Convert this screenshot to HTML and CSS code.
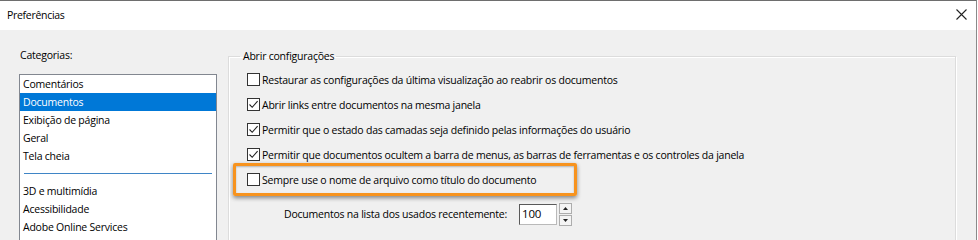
FILE: index.html
```html
<!DOCTYPE html>
<html lang="pt">
<head>
<meta charset="utf-8">
<title>Preferências</title>
<link rel="stylesheet" href="styles.css">
</head>
<body>
<div class="window">
  <div class="titlebar">
    <span class="title">Preferências</span>
    <svg class="close" width="11" height="11" viewBox="0 0 11 11"><path d="M0.5 0.5 L10.5 10.5 M10.5 0.5 L0.5 10.5" stroke="#222" stroke-width="1.1" fill="none"/></svg>
  </div>
  <div class="content">
    <div class="left">
      <div class="label">Categorias:</div>
      <div class="listbox">
        <div class="item">Comentários</div>
        <div class="item selected">Documentos</div>
        <div class="item">Exibição de página</div>
        <div class="item">Geral</div>
        <div class="item">Tela cheia</div>
        <div class="sep"></div>
        <div class="item">3D e multimídia</div>
        <div class="item">Acessibilidade</div>
        <div class="item">Adobe Online Services</div>
        <div class="item">Assinaturas</div>
      </div>
    </div>
    <fieldset class="group">
      <legend>Abrir configurações</legend>
      <div class="row"><span class="cb"></span><span>Restaurar as configurações da última visualização ao reabrir os documentos</span></div>
      <div class="row"><span class="cb checked"><svg width="11" height="11" viewBox="0 0 11 11"><path d="M1.5 5.5 L4.2 8.3 L9.6 2.2" stroke="#222" stroke-width="1.1" fill="none"/></svg></span><span>Abrir links entre documentos na mesma janela</span></div>
      <div class="row"><span class="cb checked"><svg width="11" height="11" viewBox="0 0 11 11"><path d="M1.5 5.5 L4.2 8.3 L9.6 2.2" stroke="#222" stroke-width="1.1" fill="none"/></svg></span><span>Permitir que o estado das camadas seja definido pelas informações do usuário</span></div>
      <div class="row"><span class="cb checked"><svg width="11" height="11" viewBox="0 0 11 11"><path d="M1.5 5.5 L4.2 8.3 L9.6 2.2" stroke="#222" stroke-width="1.1" fill="none"/></svg></span><span>Permitir que documentos ocultem a barra de menus, as barras de ferramentas e os controles da janela</span></div>
      <div class="row"><span class="cb"></span><span>Sempre use o nome de arquivo como título do documento</span><span class="callout"></span></div>
      <div class="recent">
        <span>Documentos na lista dos usados recentemente:</span>
        <span class="num">100</span>
        <span class="spin">
          <span class="sbtn"><svg width="5" height="3" viewBox="0 0 5 3"><path d="M0 3 L2.5 0 L5 3 Z" fill="#222"/></svg></span>
          <span class="sbtn"><svg width="5" height="3" viewBox="0 0 5 3"><path d="M0 0 L2.5 3 L5 0 Z" fill="#222"/></svg></span>
        </span>
      </div>
    </fieldset>
  </div>
</div>
</body>
</html>
```

FILE: styles.css
```css
html, body {
  margin: 0;
  padding: 0;
  background: #ffffff;
}
body {
  font-family: "Open Sans", "Noto Sans", sans-serif;
  font-size: 10.5px;
  letter-spacing: -0.22px;
  color: #000;
}
.window {
  width: 976px;
  height: 239px;
  border-top: 1px solid #6e6e6e;
  border-right: 1px solid #8a8a8a;
  background: #f0f0f0;
  overflow: hidden;
}
.titlebar {
  height: 29px;
  background: #fff;
  display: flex;
  align-items: center;
  justify-content: space-between;
  padding: 0 9px 0 7px;
}
.title {
  font-size: 10.5px;
  letter-spacing: -0.3px;
  margin-top: -1px;
}
.close {
  margin-top: -2px;
}
.content {
  display: flex;
  align-items: flex-start;
  padding: 17px 0 0 19px;
}
.left {
  width: 198px;
  display: flex;
  flex-direction: column;
}
.label {
  padding-left: 1px;
  height: 16px;
  line-height: 16px;
  margin-bottom: 11px;
}
.listbox {
  background: #fff;
  border: 1px solid #828790;
  height: 200px;
  padding-top: 0;
}
.item {
  height: 18px;
  line-height: 18px;
  padding-left: 3px;
}
.item.selected {
  background: #0078d7;
  color: #fff;
}
.sep {
  height: 1px;
  background: #3f85c6;
  margin: 8px 4px 8px 4px;
}
.group {
  margin: 1px 0 0 11px;
  width: 728px;
  height: 220px;
  border: 1px solid #dcdcdc;
  box-shadow: inset 1px 1px 0 #fff, 1px 1px 0 #fff;
  padding: 3px 0 0 18px;
  box-sizing: border-box;
}
.group legend {
  padding: 0 2px 0 3px;
  margin-left: -7px;
  line-height: 16px;
}
.row {
  position: relative;
  display: flex;
  align-items: center;
  gap: 2px;
  height: 25px;
}
.cb {
  width: 11px;
  height: 11px;
  border: 1px solid #333;
  background: #fff;
  display: flex;
}
.callout {
  position: absolute;
  left: -14px;
  top: -4px;
  width: 338px;
  height: 27px;
  border: 3px solid #f7931e;
  border-radius: 2px;
  box-shadow: 0 2px 4px rgba(0, 0, 0, 0.45), inset 0 1px 2px rgba(0, 0, 0, 0.25);
}
.recent {
  display: flex;
  align-items: center;
  margin-top: 11px;
  padding-left: 37px;
  height: 22px;
}
.num {
  margin-left: 12px;
  width: 34px;
  height: 19px;
  line-height: 18px;
  background: #fff;
  border: 1px solid #b9b9b9;
  border-top-color: #5a5a5a;
  border-left-color: #5a5a5a;
  padding-left: 2px;
  font-size: 11.5px;
}
.spin {
  margin-left: 2px;
  display: flex;
  flex-direction: column;
  gap: 1px;
}
.sbtn {
  width: 11px;
  height: 9px;
  border: 1px solid #adadad;
  background: #f4f4f4;
  display: flex;
  align-items: center;
  justify-content: center;
}
```
